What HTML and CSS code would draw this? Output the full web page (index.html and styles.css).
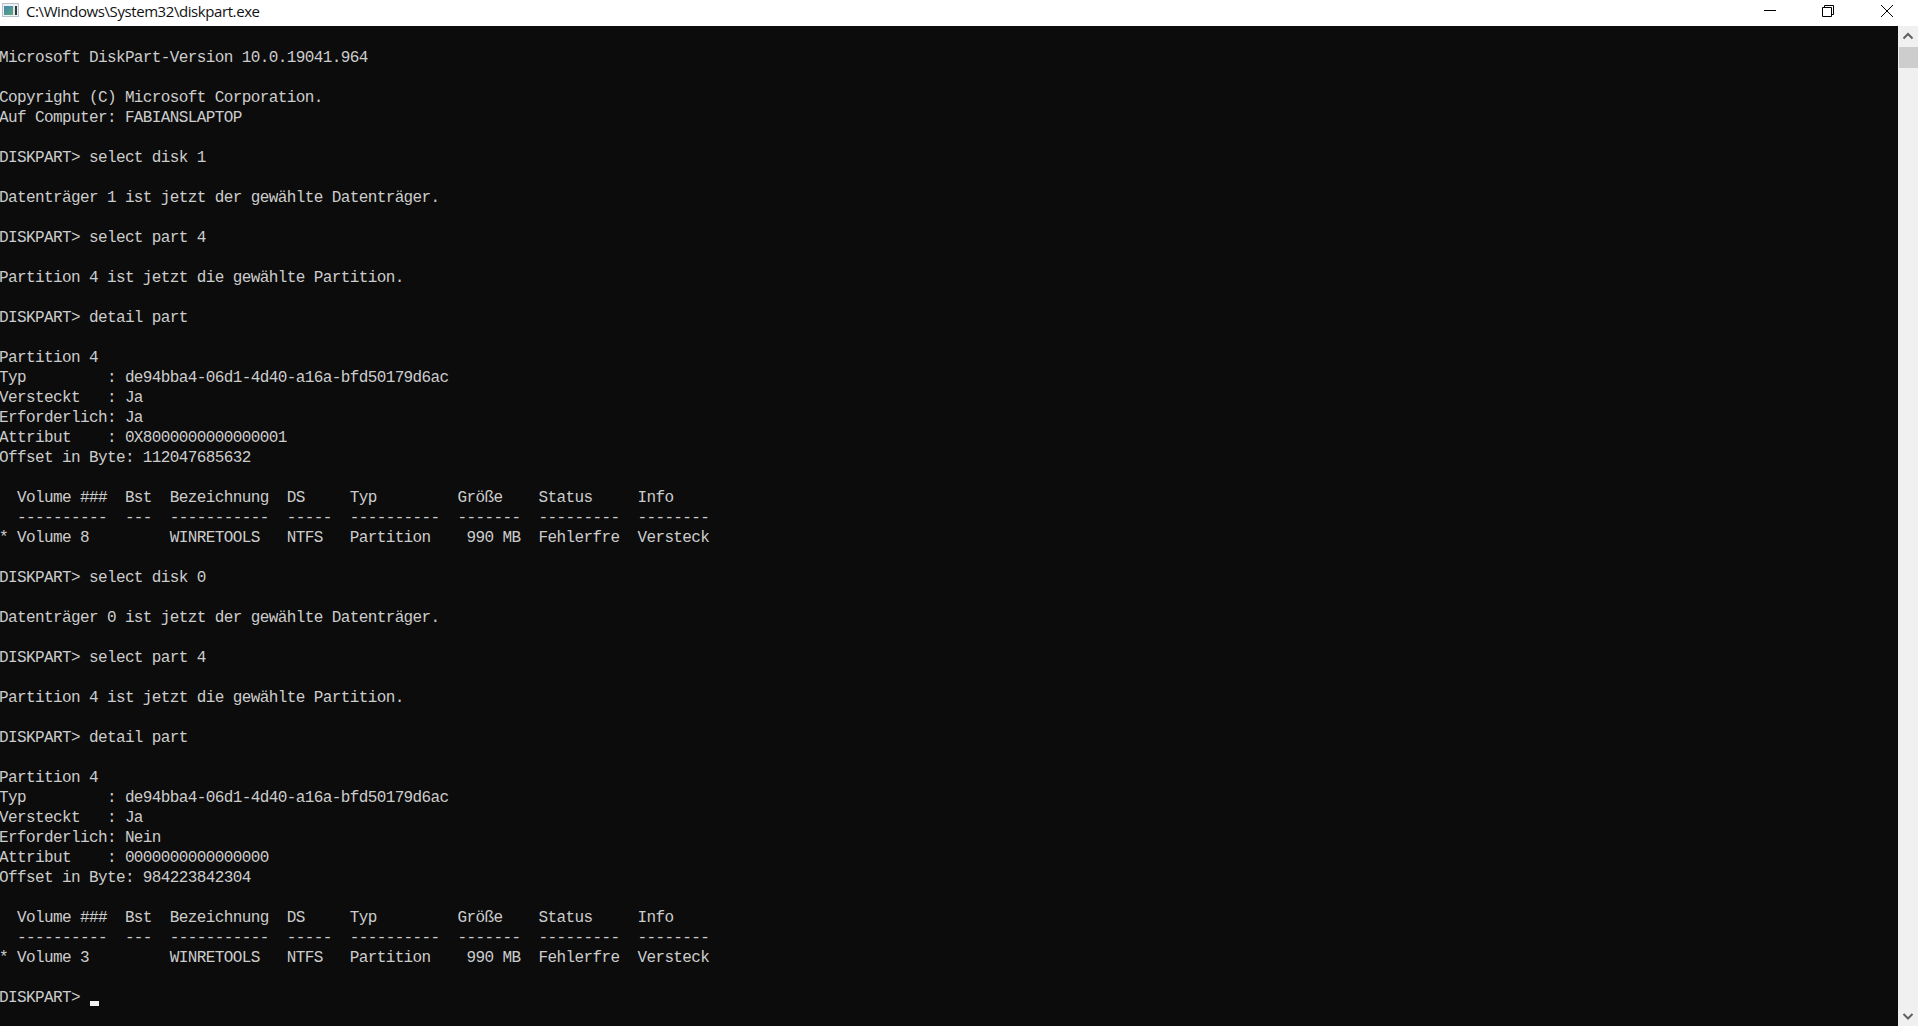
FILE: index.html
```html
<!DOCTYPE html>
<html lang="de">
<head>
<meta charset="utf-8">
<title>C:\Windows\System32\diskpart.exe</title>
<link rel="stylesheet" href="styles.css">
</head>
<body>
<div class="window">
  <header class="titlebar">
    <svg class="app-icon" width="17" height="14" viewBox="0 0 17 14">
      <defs>
        <linearGradient id="screen" x1="0" y1="0" x2="1" y2="1">
          <stop offset="0" stop-color="#3f86b4"/>
          <stop offset="1" stop-color="#5fa878"/>
        </linearGradient>
      </defs>
      <rect x="0.5" y="0.5" width="16" height="13" fill="#eef1f4" stroke="#b8c0c8"/>
      <rect x="2" y="3" width="9" height="9" fill="url(#screen)"/>
      <rect x="11" y="3" width="2" height="9" fill="#dfe6e0"/>
      <rect x="13" y="3" width="2" height="9" fill="#2c3a44"/>
    </svg>
    <span class="title">C:\Windows\System32\diskpart.exe</span>
    <div class="controls">
      <div class="ctl"><svg width="12" height="12" viewBox="0 0 12 12"><path d="M0 5.5H12" stroke="#000" fill="none"/></svg></div>
      <div class="ctl"><svg width="12" height="12" viewBox="0 0 12 12"><path d="M0.5 2.5H9.5V11.5H0.5ZM2.5 2.5V0.5H11.5V9.5H9.5" stroke="#000" fill="none"/></svg></div>
      <div class="ctl"><svg width="12" height="12" viewBox="0 0 12 12"><path d="M0 0L12 12M12 0L0 12" stroke="#000" fill="none"/></svg></div>
    </div>
  </header>
  <div class="body">
    <pre class="console">

Microsoft DiskPart-Version 10.0.19041.964

Copyright (C) Microsoft Corporation.
Auf Computer: FABIANSLAPTOP

DISKPART&gt; select disk 1

Datenträger 1 ist jetzt der gewählte Datenträger.

DISKPART&gt; select part 4

Partition 4 ist jetzt die gewählte Partition.

DISKPART&gt; detail part

Partition 4
Typ         : de94bba4-06d1-4d40-a16a-bfd50179d6ac
Versteckt   : Ja
Erforderlich: Ja
Attribut    : 0X8000000000000001
Offset in Byte: 112047685632

  Volume ###  Bst  Bezeichnung  DS     Typ         Größe    Status     Info
  ----------  ---  -----------  -----  ----------  -------  ---------  --------
* Volume 8         WINRETOOLS   NTFS   Partition    990 MB  Fehlerfre  Versteck

DISKPART&gt; select disk 0

Datenträger 0 ist jetzt der gewählte Datenträger.

DISKPART&gt; select part 4

Partition 4 ist jetzt die gewählte Partition.

DISKPART&gt; detail part

Partition 4
Typ         : de94bba4-06d1-4d40-a16a-bfd50179d6ac
Versteckt   : Ja
Erforderlich: Nein
Attribut    : 0000000000000000
Offset in Byte: 984223842304

  Volume ###  Bst  Bezeichnung  DS     Typ         Größe    Status     Info
  ----------  ---  -----------  -----  ----------  -------  ---------  --------
* Volume 3         WINRETOOLS   NTFS   Partition    990 MB  Fehlerfre  Versteck

DISKPART&gt; <span class="cursor"></span></pre>
    <aside class="scrollbar">
      <svg class="arrow arrow-up" width="20" height="21" viewBox="0 0 20 21"><path d="M5.5 12.5L10 8L14.5 12.5" stroke="#606060" stroke-width="2" fill="none"/></svg>
      <div class="thumb"></div>
      <div class="track"></div>
      <svg class="arrow" width="20" height="20" viewBox="0 0 20 20"><path d="M5.5 8L10 12.5L14.5 8" stroke="#606060" stroke-width="2" fill="none"/></svg>
    </aside>
  </div>
</div>
</body>
</html>
```
FILE: styles.css
```css
html, body {
  margin: 0;
  padding: 0;
  height: 100%;
  overflow: hidden;
}
.window {
  display: flex;
  flex-direction: column;
  height: 100%;
  background: #fff;
}
.titlebar {
  display: flex;
  align-items: flex-start;
  height: 26px;
  flex: none;
  padding: 0 2px 0 2px;
  background: #fff;
}
.app-icon {
  flex: none;
  margin: 3px 7px 0 0;
}
.title {
  flex: 1;
  font: 15px/22px "Open Sans", "Noto Sans", sans-serif;
  letter-spacing: -0.42px;
  color: #111;
  white-space: nowrap;
}
.controls {
  display: flex;
  height: 26px;
}
.ctl {
  display: flex;
  align-items: center;
  justify-content: center;
  width: 58px;
  height: 22px;
}
.ctl:last-child {
  margin-left: 1px;
}
.body {
  flex: 1;
  display: flex;
  min-height: 0;
  background: #0c0c0c;
}
.console {
  flex: 1;
  margin: 0 0 0 -1px;
  padding: 2px 0 0;
  color: #cccccc;
  font-family: "Liberation Mono", "DejaVu Sans Mono", monospace;
  font-size: 16px;
  line-height: 20px;
  letter-spacing: -0.61px;
  overflow: hidden;
}
.cursor {
  display: inline-block;
  width: 9px;
  height: 5px;
  margin-left: 1px;
  background: #f2f2f2;
  vertical-align: -4px;
}
.scrollbar {
  flex: none;
  width: 20px;
  display: flex;
  flex-direction: column;
  align-items: flex-end;
  background: #f0f0f0;
}
.arrow {
  flex: none;
}
.thumb {
  flex: none;
  width: 19px;
  height: 21px;
  background: #cdcdcd;
}
.track {
  flex: 1;
}
```
